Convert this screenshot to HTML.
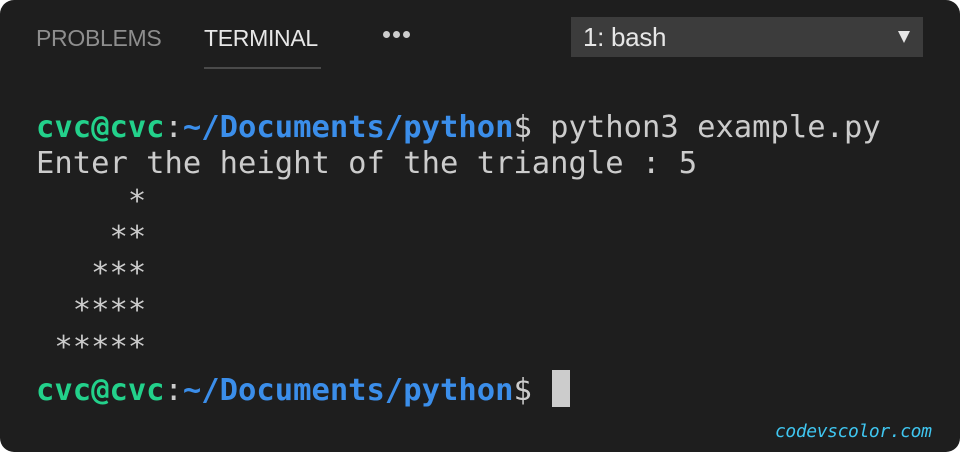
<!DOCTYPE html>
<html><head><style>
html,body{margin:0;padding:0;background:#fff;}
#w{position:relative;width:960px;height:452px;background:#1e1e1e;border-radius:14px;overflow:hidden;font-family:"Liberation Sans",sans-serif;}
.t{position:absolute;top:25px;font-size:23px;letter-spacing:-0.3px;}
.m{position:absolute;left:36px;font-family:"DejaVu Sans Mono","Liberation Mono",monospace;font-size:30.5px;color:#cccccc;white-space:pre;line-height:36px;}
.g{color:#23d18b;font-weight:bold}.b{color:#3b8eea;font-weight:bold}
</style></head><body><div id="w">
<div class="t" style="left:36px;color:#8e8e8e">PROBLEMS</div>
<div class="t" style="left:204px;color:#e7e7e7">TERMINAL</div>
<div style="position:absolute;left:204px;top:67px;width:117px;height:2px;background:#4a4a4a"></div>
<div style="position:absolute;left:383px;top:30px;line-height:7px;">
<span style="display:inline-block;width:7px;height:7px;border-radius:50%;background:#ccc;margin-right:3px"></span><span style="display:inline-block;width:7px;height:7px;border-radius:50%;background:#ccc;margin-right:3px"></span><span style="display:inline-block;width:7px;height:7px;border-radius:50%;background:#ccc"></span></div>
<div style="position:absolute;left:571px;top:17px;width:352px;height:40px;background:#3c3c3c"></div>
<div class="t" style="left:583px;top:22px;font-size:26px;color:#e7e7e7">1: bash</div>
<div style="position:absolute;left:898px;top:31px;width:0;height:0;border-left:6px solid transparent;border-right:6px solid transparent;border-top:12px solid #e7e7e7"></div>
<div class="m" style="top:110px"><span class="g">cvc@cvc</span>:<span class="b">~/Documents/python</span>$ python3 example.py</div>
<div class="m" style="top:146px">Enter the height of the triangle : 5</div>
<div class="m" style="top:184px">     *</div>
<div class="m" style="top:220px">    **</div>
<div class="m" style="top:256px">   ***</div>
<div class="m" style="top:293px">  ****</div>
<div class="m" style="top:330px"> *****</div>
<div class="m" style="top:373px"><span class="g">cvc@cvc</span>:<span class="b">~/Documents/python</span>$ </div>
<div style="position:absolute;left:552px;top:370px;width:18px;height:37px;background:#cccccc"></div>
<div style="position:absolute;left:775px;top:421px;font-family:'DejaVu Sans Mono',monospace;font-style:italic;font-size:18px;letter-spacing:-0.4px;color:#3fc6f0">codevscolor.com</div>
</div></body></html>
